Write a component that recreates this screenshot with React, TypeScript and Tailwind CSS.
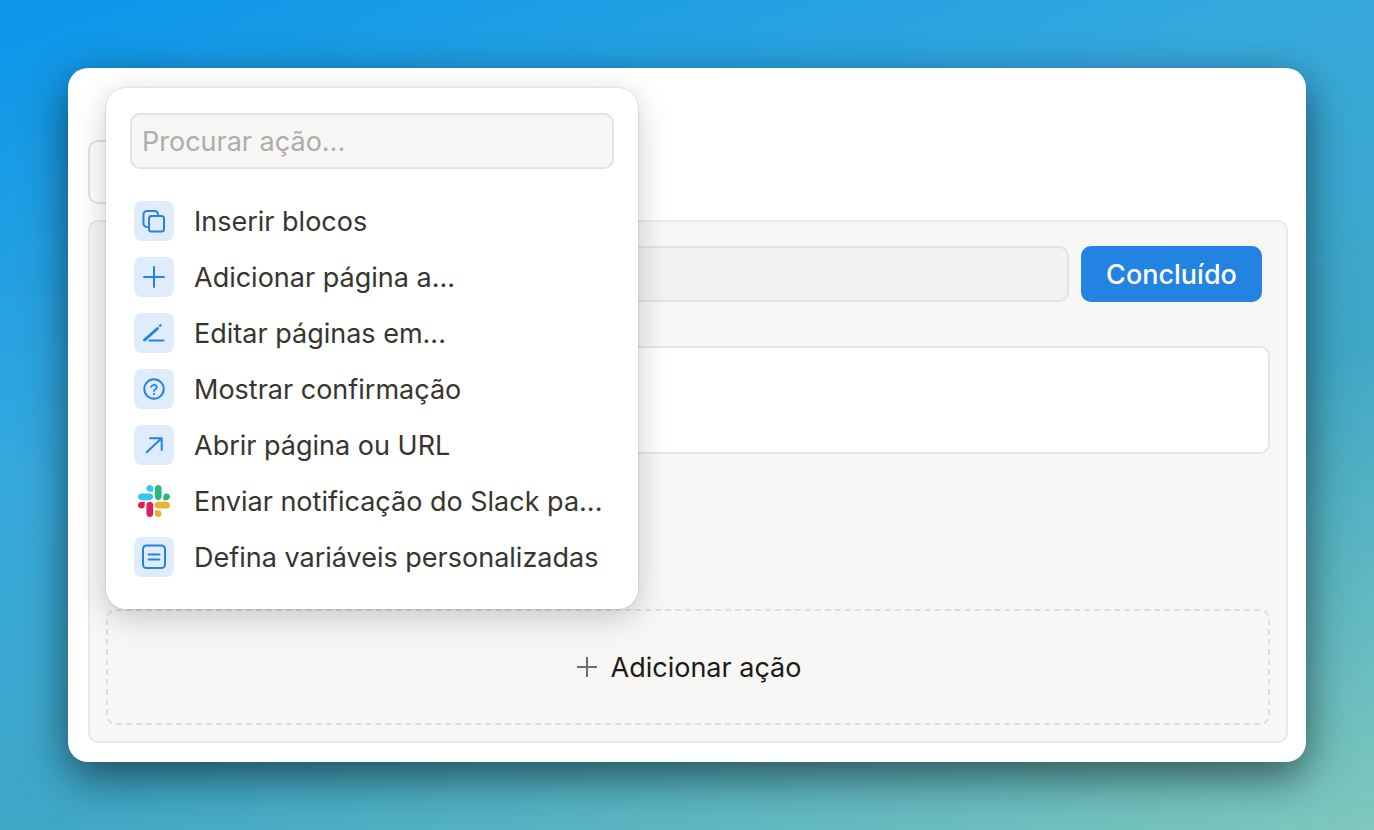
const slackPaths = [
  { d: 'M25.8 77.6c0 7.1-5.8 12.9-12.9 12.9S0 84.7 0 77.6s5.8-12.9 12.9-12.9h12.9v12.9z', fill: '#E01E5A' },
  { d: 'M32.3 77.6c0-7.1 5.8-12.9 12.9-12.9s12.9 5.8 12.9 12.9v32.3c0 7.1-5.8 12.9-12.9 12.9s-12.9-5.8-12.9-12.9V77.6z', fill: '#E01E5A' },
  { d: 'M45.2 25.8c-7.1 0-12.9-5.8-12.9-12.9S38.1 0 45.2 0s12.9 5.8 12.9 12.9v12.9H45.2z', fill: '#36C5F0' },
  { d: 'M45.2 32.3c7.1 0 12.9 5.8 12.9 12.9s-5.8 12.9-12.9 12.9H12.9C5.8 58.1 0 52.3 0 45.2s5.8-12.9 12.9-12.9h32.3z', fill: '#36C5F0' },
  { d: 'M97 45.2c0-7.1 5.8-12.9 12.9-12.9s12.9 5.8 12.9 12.9-5.8 12.9-12.9 12.9H97V45.2z', fill: '#2EB67D' },
  { d: 'M90.5 45.2c0 7.1-5.8 12.9-12.9 12.9s-12.9-5.8-12.9-12.9V12.9C64.7 5.8 70.5 0 77.6 0s12.9 5.8 12.9 12.9v32.3z', fill: '#2EB67D' },
  { d: 'M77.6 97c7.1 0 12.9 5.8 12.9 12.9s-5.8 12.9-12.9 12.9-12.9-5.8-12.9-12.9V97h12.9z', fill: '#ECB22E' },
  { d: 'M77.6 90.5c-7.1 0-12.9-5.8-12.9-12.9s5.8-12.9 12.9-12.9h32.3c7.1 0 12.9 5.8 12.9 12.9s-5.8 12.9-12.9 12.9H77.6z', fill: '#ECB22E' },
];

function SlackIcon() {
  return (
    <div className="flex h-10 w-10 shrink-0 items-center justify-center">
      <svg width="32" height="32" viewBox="0 0 122.8 122.8">
        {slackPaths.map((p) => (
          <path key={p.d} d={p.d} fill={p.fill} />
        ))}
      </svg>
    </div>
  );
}

function Tile({ children }: { children: React.ReactNode }) {
  return (
    <div className="h-10 w-10 shrink-0 rounded-lg bg-[#dfecfb]">
      <svg width="40" height="40" viewBox="0 0 40 40" fill="none" stroke="#2383e2" strokeWidth="2" strokeLinecap="round" strokeLinejoin="round">
        {children}
      </svg>
    </div>
  );
}

const rows = [
  {
    label: 'Inserir blocos',
    icon: (
      <Tile>
        <path d="M13 26a3.5 3.5 0 0 1-3.5-3.5v-9A3.5 3.5 0 0 1 13 10h7.5a3.5 3.5 0 0 1 3.5 3" />
        <rect x="15" y="15" width="15" height="15.5" rx="2.5" />
      </Tile>
    ),
  },
  {
    label: 'Adicionar página a...',
    icon: (
      <Tile>
        <path d="M10 20h20M20 10v20" />
      </Tile>
    ),
  },
  {
    label: 'Editar páginas em...',
    icon: (
      <Tile>
        <path d="M10.5 27 23.5 15.5" strokeWidth="3" />
        <path d="M26 12.8l.6-.6" strokeWidth="2.2" />
        <path d="M15.5 27.5h14" />
      </Tile>
    ),
  },
  {
    label: 'Mostrar confirmação',
    icon: (
      <Tile>
        <circle cx="20" cy="20" r="9.7" />
        <path d="M17.2 17.8a2.9 2.9 0 0 1 5.6 .6c0 1.8-2.8 2-2.8 3.7" strokeWidth="1.8" />
        <path d="M20 24.8v.1" strokeWidth="2" />
      </Tile>
    ),
  },
  {
    label: 'Abrir página ou URL',
    icon: (
      <Tile>
        <path d="M12.7 27.3 27.3 13.6M16 13.3h11.7V25" />
      </Tile>
    ),
  },
  { label: 'Enviar notificação do Slack pa...', icon: <SlackIcon /> },
  {
    label: 'Defina variáveis personalizadas',
    icon: (
      <Tile>
        <rect x="9" y="8.5" width="22" height="22.5" rx="3.5" />
        <path d="M14.5 17.5h11M14.5 22.5h11" strokeWidth="1.8" />
      </Tile>
    ),
  },
];

export default function App() {
  return (
    <div className="flex h-[830px] w-[1374px] items-start overflow-hidden bg-[linear-gradient(160deg,#0a95eb_0%,#36a9dc_37%,#3fa7c6_63%,#7fc8bc_100%)] pl-[68px] pt-[68px] font-['Inter',sans-serif]">
      <div className="relative flex h-[694px] w-[1238px] flex-col rounded-[20px] bg-white pb-[19px] pl-5 pr-[18px] pt-[72px] shadow-[0_14px_44px_rgba(0,0,0,0.55)]">
        <div className="h-16 w-[400px] shrink-0 rounded-[10px] border-2 border-[#e3e3e1]" />

        <div className="mt-4 flex flex-1 flex-col rounded-[10px] border-2 border-[#e9e9e7] bg-[#f7f7f5] px-4 pb-4 pt-6">
          <div className="flex gap-3 pr-2">
            <div className="h-14 flex-1 rounded-[10px] border-2 border-[#e3e3e1] bg-[#f3f2f0]" />
            <button className="flex h-14 w-[181px] items-center justify-center rounded-[10px] bg-[#2383e2] pt-0.5 text-[27px] font-[550] text-white">
              Concluído
            </button>
          </div>

          <div className="mt-11 h-[108px] rounded-[10px] border-2 border-[#e6e6e4] bg-white" />

          <div className="mt-auto flex h-[116px] items-center justify-center gap-[14px] rounded-[10px] border-2 border-dashed border-[#dededc] pl-0.5">
            <svg width="20" height="20" viewBox="0 0 20 20" fill="none" stroke="#6e6d6a" strokeWidth="2">
              <path d="M0 10h20M10 0v20" />
            </svg>
            <span className="mt-0.5 text-[27px] text-[#1d1b16]">Adicionar ação</span>
          </div>
        </div>

        <div className="absolute left-[38px] top-5 flex h-[521px] w-[532px] flex-col rounded-[20px] bg-white px-6 pb-8 pt-[25px] shadow-[0_8px_32px_rgba(0,0,0,0.2),0_0_2px_rgba(0,0,0,0.22)]">
          <div className="flex h-14 items-center rounded-[10px] border-2 border-[#e3e3e1] bg-[#f7f6f4] px-[10px] pt-0.5 text-[27px] text-[#adadaa]">
            Procurar ação...
          </div>
          <div className="mt-8 flex flex-col gap-4 pl-1">
            {rows.map((r) => (
              <div key={r.label} className="flex h-10 items-center gap-5">
                {r.icon}
                <span className="mt-0.5 text-[27px] text-[#37352f]">{r.label}</span>
              </div>
            ))}
          </div>
        </div>
      </div>
    </div>
  );
}
